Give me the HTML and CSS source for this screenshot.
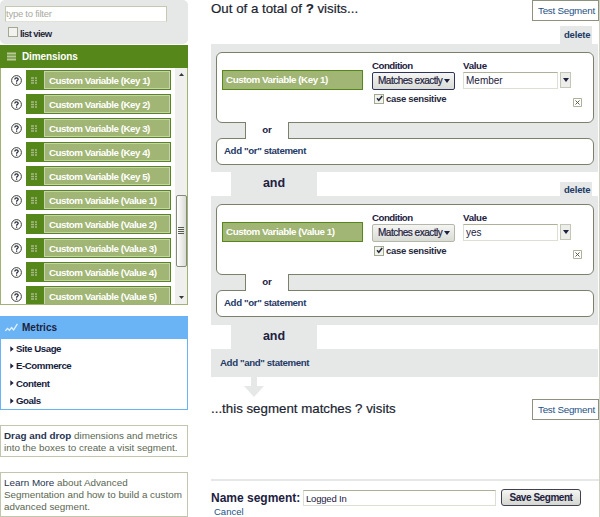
FILE: index.html
```html
<!DOCTYPE html>
<html lang="en">
<head>
<meta charset="utf-8">
<title>Advanced Segment</title>
<link rel="stylesheet" href="styles.css">
</head>
<body>
<svg width="0" height="0" class="defs">
  <symbol id="help" viewBox="0 0 11 11"><circle cx="5.5" cy="5.5" r="4.9" fill="#fff" stroke="#3c4238"/><path d="M3.8 4.4C3.8 2.5 7.2 2.5 7.2 4.3C7.2 5.4 5.6 5.3 5.6 6.7M5.6 7.6V8.7" fill="none" stroke="#222638" stroke-width="1.2"/></symbol>
  <symbol id="grip" viewBox="0 0 7 7"><path d="M0 1h3M4 1h2M0 3.5h3M4 3.5h2M0 6h3M4 6h2" stroke="#a9b98a" stroke-width="1.3"/></symbol>
  <symbol id="check" viewBox="0 0 9 9"><path d="M2 4.2L3.8 6.3L7.2 2" fill="none" stroke="#24283a" stroke-width="1.5"/></symbol>
</svg>
<div class="page">
  <aside class="side">
    <div class="filter">
      <div class="filter-input">type to filter</div>
      <div class="list-view"><span class="box"></span><span class="list-label">list view</span></div>
    </div>
    <div class="dim-head">
      <svg width="9" height="9" viewBox="0 0 9 9"><path d="M0 1.5h9M0 4.5h9M0 7.5h9" stroke="#bac99b" stroke-width="2"/></svg>
      <span>Dimensions</span>
    </div>
    <div class="dim-body">
      <div class="dim-list">
        <div class="dim"><svg class="help"><use href="#help"/></svg><div class="pill"><svg class="grip"><use href="#grip"/></svg><span>Custom Variable (Key 1)</span></div></div>
        <div class="dim"><svg class="help"><use href="#help"/></svg><div class="pill"><svg class="grip"><use href="#grip"/></svg><span>Custom Variable (Key 2)</span></div></div>
        <div class="dim"><svg class="help"><use href="#help"/></svg><div class="pill"><svg class="grip"><use href="#grip"/></svg><span>Custom Variable (Key 3)</span></div></div>
        <div class="dim"><svg class="help"><use href="#help"/></svg><div class="pill"><svg class="grip"><use href="#grip"/></svg><span>Custom Variable (Key 4)</span></div></div>
        <div class="dim"><svg class="help"><use href="#help"/></svg><div class="pill"><svg class="grip"><use href="#grip"/></svg><span>Custom Variable (Key 5)</span></div></div>
        <div class="dim"><svg class="help"><use href="#help"/></svg><div class="pill"><svg class="grip"><use href="#grip"/></svg><span>Custom Variable (Value 1)</span></div></div>
        <div class="dim"><svg class="help"><use href="#help"/></svg><div class="pill"><svg class="grip"><use href="#grip"/></svg><span>Custom Variable (Value 2)</span></div></div>
        <div class="dim"><svg class="help"><use href="#help"/></svg><div class="pill"><svg class="grip"><use href="#grip"/></svg><span>Custom Variable (Value 3)</span></div></div>
        <div class="dim"><svg class="help"><use href="#help"/></svg><div class="pill"><svg class="grip"><use href="#grip"/></svg><span>Custom Variable (Value 4)</span></div></div>
        <div class="dim"><svg class="help"><use href="#help"/></svg><div class="pill"><svg class="grip"><use href="#grip"/></svg><span>Custom Variable (Value 5)</span></div></div>
      </div>
      <div class="scroll">
        <svg width="5" height="3" viewBox="0 0 5 3"><path d="M0 3L2.5 0L5 3z" fill="#33383a"/></svg>
        <div class="thumb"><i></i><i></i><i></i><i></i></div>
        <svg width="5" height="3" viewBox="0 0 5 3"><path d="M0 0L2.5 3L5 0z" fill="#33383a"/></svg>
      </div>
    </div>
    <div class="met-head">
      <svg width="13" height="9" viewBox="0 0 13 9"><path d="M.4 7.8L2.5 5.4L4.4 7.3L6.6 4.6L8.6 7L12.4 .8" fill="none" stroke="#e4f2ff" stroke-width="1.3"/></svg>
      <span>Metrics</span>
    </div>
    <div class="met-body">
      <div><svg class="tri" viewBox="0 0 4 6"><path d="M.3 .3L3.7 3L.3 5.7z"/></svg><span>Site Usage</span></div>
      <div><svg class="tri" viewBox="0 0 4 6"><path d="M.3 .3L3.7 3L.3 5.7z"/></svg><span>E-Commerce</span></div>
      <div><svg class="tri" viewBox="0 0 4 6"><path d="M.3 .3L3.7 3L.3 5.7z"/></svg><span>Content</span></div>
      <div><svg class="tri" viewBox="0 0 4 6"><path d="M.3 .3L3.7 3L.3 5.7z"/></svg><span>Goals</span></div>
    </div>
    <div class="tip drag"><b>Drag and drop</b> dimensions and metrics<br>into the boxes to create a visit segment.</div>
    <div class="tip learn"><a>Learn More</a> about Advanced<br>Segmentation and how to build a custom<br>advanced segment.</div>
  </aside>

  <main class="main">
    <div class="top">
      <h2>Out of a total of <b>?</b> visits...</h2>
      <div class="test">Test Segment</div>
    </div>
    <div class="tab-row first"><span class="delete">delete</span></div>
    <section class="group">
      <div class="rule">
        <div class="var">Custom Variable (Key 1)</div>
        <div class="cond">
          <label>Condition</label>
          <div class="select dark"><span>Matches exactly</span><svg class="down" viewBox="0 0 6 4"><path d="M0 0h6L3 4z"/></svg></div>
          <div class="case"><span class="box"><svg width="9" height="9"><use href="#check"/></svg></span><span>case sensitive</span></div>
        </div>
        <div class="val">
          <label>Value</label>
          <div class="combo"><div class="field">Member</div><div class="drop"><svg class="down" viewBox="0 0 6 4"><path d="M0 0h6L3 4z"/></svg></div></div>
        </div>
        <svg class="close" viewBox="0 0 9 9"><path d="M.5 .5h8v8h-8z" fill="#fff" stroke="#aeb09c"/><path d="M2.5 2.5l4 4M6.5 2.5l-4 4" stroke="#555c4c"/></svg>
      </div>
      <div class="or">or</div>
      <div class="add-or">Add "or" statement</div>
    </section>
    <div class="tab-row"><span class="and">and</span><span class="delete">delete</span></div>
    <section class="group second">
      <div class="rule">
        <div class="var">Custom Variable (Value 1)</div>
        <div class="cond">
          <label>Condition</label>
          <div class="select"><span>Matches exactly</span><svg class="down" viewBox="0 0 6 4"><path d="M0 0h6L3 4z"/></svg></div>
          <div class="case"><span class="box"><svg width="9" height="9"><use href="#check"/></svg></span><span>case sensitive</span></div>
        </div>
        <div class="val">
          <label>Value</label>
          <div class="combo"><div class="field">yes</div><div class="drop"><svg class="down" viewBox="0 0 6 4"><path d="M0 0h6L3 4z"/></svg></div></div>
        </div>
        <svg class="close" viewBox="0 0 9 9"><path d="M.5 .5h8v8h-8z" fill="#fff" stroke="#aeb09c"/><path d="M2.5 2.5l4 4M6.5 2.5l-4 4" stroke="#555c4c"/></svg>
      </div>
      <div class="or">or</div>
      <div class="add-or">Add "or" statement</div>
    </section>
    <div class="tab-row"><span class="and">and</span></div>
    <div class="add-and">Add "and" statement</div>
    <svg class="arrow" viewBox="0 0 20 20"><path d="M7 0h6v9h7L10 20L0 9h7z" fill="#e6e8e7"/></svg>
    <div class="result">
      <h2>...this segment matches ? visits</h2>
      <div class="test">Test Segment</div>
    </div>
    <div class="save-row">
      <span class="name">Name segment:</span>
      <div class="name-field">Logged In</div>
      <div class="save">Save Segment</div>
    </div>
    <a class="cancel">Cancel</a>
  </main>
</div>
</body>
</html>
```
FILE: styles.css
```css
* { box-sizing: border-box; }
body { margin: 0; background: #fff; color: #1d2140; font: 10px "Liberation Sans", sans-serif; overflow: hidden; white-space: nowrap; }
svg { display: block; flex: none; }
.defs { position: absolute; }
.page { display: flex; gap: 23px; width: 600px; height: 517px; }

.side { width: 188px; flex: none; }
.filter { height: 44px; padding: 6px 5px 0; border-radius: 5px; background: #e6e8e7; }
.filter-input { width: 162px; height: 16px; padding-left: 0; border: 1px solid #c6c8b2; border-bottom-color: #e0e2d8; background: #fff; color: #a9aba0; font-size: 9.5px; line-height: 14px; letter-spacing: -.25px; }
.list-view { display: flex; align-items: center; height: 10px; margin: 5px 0 0 3px; }
.box { width: 10px; height: 10px; flex: none; border: 1px solid #a3a890; background: #f2f3ee; }
.list-label { margin: 2px 0 0 2px; font-weight: bold; font-size: 9.5px; letter-spacing: -.6px; }
.list-label, .case span { color: #262a3c; }
.dim-head { display: flex; align-items: center; height: 23px; margin-top: 1px; padding-left: 7px; gap: 6px; background: #56871a; color: #fff; font-weight: bold; font-size: 10px; letter-spacing: -.1px; }
.dim-body { display: flex; height: 237px; border: 1px solid #a0b373; border-top: 0; }
.dim-list { display: flex; flex-direction: column; gap: 4px; width: 174px; padding: 2px 0 0 10px; overflow: hidden; }
.dim { display: flex; align-items: center; height: 20px; flex: none; gap: 4px; }
.help { width: 11px; height: 11px; }
.pill { display: flex; align-items: center; width: 145px; height: 20px; padding: 1px 1px 1px 5px; background: #56871a; }
.grip { width: 7px; height: 7px; margin-right: 6px; }
.pill span { flex: 1; height: 18px; padding-left: 4px; border: 1px solid #c8d2b2; background: #a1b574; color: #fff; font-weight: bold; font-size: 9.8px; line-height: 17px; letter-spacing: -.49px; }
.scroll { display: flex; flex-direction: column; justify-content: space-between; align-items: center; flex: 1; padding: 5px 0; background: #eff0ee; }
.thumb { display: flex; flex-direction: column; justify-content: center; align-items: center; gap: 1px; width: 11px; height: 72px; margin-top: 89px; border: 1px solid #858a7c; border-radius: 2px; background: linear-gradient(90deg, #fff, #d9dbd5); }
.thumb i { width: 6px; height: 1px; background: #555b4e; }
.met-head { display: flex; align-items: center; gap: 4px; height: 23px; margin-top: 11px; padding-left: 5px; background: #6ab4f5; font-weight: bold; font-size: 10px; }
.met-body { height: 71px; margin-bottom: 15px; padding-top: 1px; border: 1px solid #6ab4f5; border-top: 0; color: #161c3c; font-weight: bold; font-size: 9.7px; letter-spacing: -.45px; }
.met-body div { display: flex; align-items: center; gap: 2px; height: 17.3px; padding-left: 9px; }
.tri { width: 4px; height: 6px; fill: #1d2140; }
.tip { padding: 4px 3px; border: 1px solid #c3c6ae; color: #5a6650; font-size: 9.85px; line-height: 12px; }
.tip a, .tip b { color: #263450; }
.drag { height: 32px; }
.learn { height: 45px; margin-top: 15px; }

.main { width: 389px; height: 517px; border-right: 1px solid #cfd0c2; }
.top, .result { display: flex; justify-content: space-between; }
.top { height: 26px; }
h2 { margin: 0; font-weight: normal; font-size: 13.3px; line-height: 18px; color: #1b1f30; -webkit-text-stroke: .2px #1b1f30; }
.test { width: 67px; height: 21px; padding-left: 5px; border: 1px solid #8d9180; color: #245283; font-size: 9.8px; line-height: 19px; letter-spacing: -.25px; }
.tab-row { display: flex; align-items: flex-end; height: 24px; padding: 0 7px 0 20px; }
.tab-row.first { height: 18px; }
.delete { width: 32px; height: 14px; margin-left: auto; padding-left: 4px; background: #e6e8e7; color: #203a66; font-weight: bold; font-size: 9.5px; line-height: 16px; letter-spacing: -.2px; }
.first .delete { height: 18px; line-height: 18px; }
.and { width: 86px; height: 24px; background: #e6e8e7; font-weight: bold; font-size: 12.5px; line-height: 23px; text-align: center; }
.group { width: 387px; height: 128px; padding: 8px 4px 0 5px; background: #e6e8e7; }
.group.second { height: 129px; }
.rule { display: flex; height: 71px; padding: 8px 5px 0; border: 1px solid #7b806d; border-radius: 6px; background: #fff; }
.var { width: 141px; height: 20px; margin-top: 9px; padding-left: 3px; border: 1px solid #56871a; background: #a1b574; color: #fff; font-weight: bold; font-size: 9.8px; line-height: 18px; letter-spacing: -.45px; }
.cond { width: 83px; margin-left: 9px; }
label { display: block; height: 11px; font-weight: bold; font-size: 9.7px; line-height: 10px; letter-spacing: -.5px; }
.val label { letter-spacing: -.3px; }
.select { display: flex; align-items: center; justify-content: space-between; height: 18px; padding: 0 4px 0 5px; border: 1px solid #b5b8a9; border-radius: 2px; background: linear-gradient(#f5f5f3, #d9dbd5); font-size: 10px; line-height: 16px; letter-spacing: -.5px; -webkit-text-stroke: .2px #1d2140; }
.select span { height: 17px; }
.select.dark { border-color: #30345a; }
.down { width: 6px; height: 4px; fill: #1d2140; }
.case { display: flex; align-items: center; gap: 2px; margin: 3px 0 0 2px; }
.case .box svg { margin: -.5px; }
.case > span:last-child { font-weight: bold; font-size: 9.5px; letter-spacing: -.3px; }
.val { margin-left: 8px; }
.combo { display: flex; gap: 2px; }
.field { width: 95px; height: 17px; padding-left: 2px; border: 1px solid #dddfd5; border-top-color: #aeb097; font-size: 10px; line-height: 16px; }
.drop { display: flex; align-items: center; justify-content: center; width: 11px; height: 16px; border: 1px solid #c4c6b8; background: #edeeea; }
.close { width: 9px; height: 9px; margin: 37px 6px 0 auto; }
.or { position: relative; width: 44px; height: 17px; margin: -1px 0 -1px 29px; border: solid #7b806d; border-width: 0 1px; background: #fff; font-weight: bold; font-size: 9.7px; line-height: 16px; text-align: center; }
.add-or { height: 27px; padding-left: 7px; border: 1px solid #7b806d; border-radius: 6px; background: #fff; color: #1f3a66; font-weight: bold; font-size: 9.7px; line-height: 24px; letter-spacing: -.38px; }
.add-and { width: 387px; height: 28px; padding-left: 9px; background: #e6e8e7; color: #1f3a66; font-weight: bold; font-size: 9.7px; line-height: 27px; letter-spacing: -.38px; }
.arrow { width: 20px; height: 20px; margin-left: 33px; }
.result { height: 82px; margin-top: 2px; border-bottom: 2px solid #e6e8e7; }
.result h2 { line-height: 19px; }
.save-row { display: flex; align-items: center; height: 17px; margin-top: 8px; }
.name { width: 92px; font-weight: bold; font-size: 12px; }
.name-field { width: 193px; height: 16px; padding-left: 2px; border: 1px solid #dddfd5; border-top-color: #aeb097; line-height: 15px; font-size: 9.5px; letter-spacing: -.2px; }
.save { width: 80px; height: 17px; margin-left: 5px; border: 1px solid #3e4250; border-radius: 3px; background: linear-gradient(#f6f6f4, #d4d6cf); font-weight: bold; font-size: 10px; line-height: 15px; letter-spacing: -.45px; text-align: center; }
.cancel { display: block; margin-left: 3px; color: #245283; font-size: 9.5px; line-height: 11px; }
```
